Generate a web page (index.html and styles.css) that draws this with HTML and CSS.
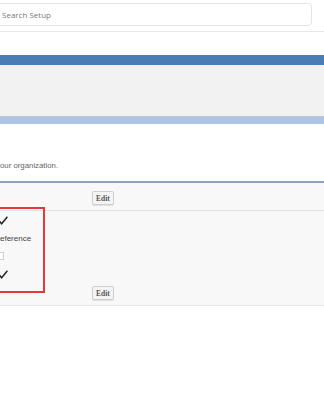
FILE: index.html
```html
<!DOCTYPE html>
<html lang="en">
<head>
  <meta charset="UTF-8" />
  <meta name="viewport" content="width=device-width, initial-scale=1.0"/>
  <title>Setup</title>
  <link rel="stylesheet" href="styles.css">
</head>
<body>
  <div class="page">
    <div class="topbar">
      <div class="search">Search Setup</div>
    </div>

    <div class="banner">
      <div class="banner-top"></div>
      <div class="banner-body"></div>
      <div class="banner-bottom"></div>
    </div>

    <div class="intro">
      <p>our organization.</p>
    </div>

    <div class="section">
      <div class="section-head">
        <button class="btn">Edit</button>
      </div>
      <div class="section-body">
        <div class="rows">
          <div class="row">
            <svg class="check" width="9" height="9" viewBox="0 0 9 9"><path d="M0.5 5.2 L2.6 7.8 L8.4 0.8" fill="none" stroke="#222" stroke-width="1.4"/></svg>
          </div>
          <div class="row label">eference</div>
          <div class="row"><span class="box"></span></div>
          <div class="row">
            <svg class="check" width="9" height="9" viewBox="0 0 9 9"><path d="M0.5 5.2 L2.6 7.8 L8.4 0.8" fill="none" stroke="#222" stroke-width="1.4"/></svg>
          </div>
        </div>
        <div class="actions">
          <button class="btn">Edit</button>
        </div>
        <div class="highlight"></div>
      </div>
    </div>
  </div>
</body>
</html>
```

FILE: styles.css
```css
body {
  margin: 0;
  background-color: #fff;
  font-family: 'Liberation Sans', Arial, sans-serif;
  color: #333;
}
.page {
  width: 324px;
  overflow: hidden;
}
.topbar {
  height: 28px;
  padding-top: 3px;
  border-bottom: 1px solid #e8e8e8;
}
.search {
  box-sizing: border-box;
  margin-left: -30px;
  width: 342px;
  height: 23px;
  padding-left: 31px;
  border: 1px solid #e4e4e4;
  border-radius: 4px;
  font-family: 'Open Sans', sans-serif;
  font-size: 8px;
  line-height: 21px;
  color: #7a7a7a;
}
.banner {
  margin-top: 23px;
}
.banner-top {
  height: 10px;
  background-color: #4a7db4;
}
.banner-body {
  height: 51px;
  background-color: #f2f2f2;
  border-bottom: 1px solid #c8c8c8;
}
.banner-bottom {
  height: 7px;
  background-color: #abc5e6;
}
.intro {
  height: 57px;
}
.intro p {
  margin: 0;
  padding-top: 37px;
  font-size: 7.8px;
  color: #666;
  white-space: nowrap;
}
.section {
  border-top: 2px solid #8fa2c1;
}
.section-head {
  box-sizing: border-box;
  height: 28px;
  padding: 8px 0 0 92px;
  background-color: #f8f8f8;
  border-bottom: 1px solid #e2e2e2;
}
.btn {
  display: block;
  box-sizing: border-box;
  width: 22px;
  height: 14px;
  padding: 0;
  border: 1px solid #cfcfcf;
  border-radius: 2px;
  background-color: #f4f4f4;
  box-shadow: 0 1px 0 #e0e0e0;
  font-family: 'Liberation Serif', serif;
  font-weight: bold;
  font-size: 7.5px;
  color: #555;
}
.section-body {
  position: relative;
  background-color: #f8f8f8;
  border-bottom: 1px solid #e6e6e6;
  padding-bottom: 5px;
}
.rows {
  display: grid;
  grid-auto-rows: 18px;
  align-items: center;
}
.row {
  display: flex;
  align-items: center;
  margin-left: -1px;
}
.label {
  margin-left: 0;
  font-size: 8px;
  color: #444;
  white-space: nowrap;
}
.box {
  display: block;
  margin-left: -4px;
  width: 7px;
  height: 6px;
  border: 1px solid #cfcfcf;
  background-color: #fff;
}
.actions {
  padding: 3px 0 0 92px;
}
.highlight {
  position: absolute;
  top: -4px;
  left: -10px;
  width: 51px;
  height: 82px;
  border: 2px solid #e2393d;
}
```
